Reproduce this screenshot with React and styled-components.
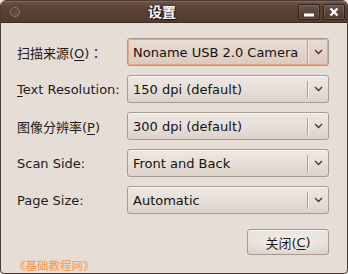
import React from "react";
import styled, { createGlobalStyle } from "styled-components";

const GlobalStyle = createGlobalStyle`
  html, body { margin: 0; padding: 0; background: #ece7e2; }
  * { box-sizing: border-box; }
`;

const FONT = `"DejaVu Sans", "Noto Sans CJK SC", sans-serif`;

const Window = styled.div`
  width: 348px;
  height: 274px;
  border: 1px solid #4a3c34;
  border-radius: 6px 6px 4px 4px;
  overflow: hidden;
  display: flex;
  flex-direction: column;
  background: #e6ded6;
  font-family: ${FONT};
`;

const TitleBar = styled.div`
  height: 22px;
  flex: none;
  display: flex;
  align-items: center;
  padding: 0 2px 0 9px;
  background: linear-gradient(#6e5447 0%, #5c4337 30%, #543b30 100%);
  border-bottom: 1px solid #3a2a22;
  box-shadow: inset 0 1px 0 rgba(255, 255, 255, 0.12);
`;

const MenuDot = styled.div`
  width: 10px;
  height: 10px;
  border-radius: 50%;
  border: 1.5px solid #8e7c71;
  background: radial-gradient(circle at 60% 65%, #6b5246, #4d362c);
  margin-right: 6px;
  flex: none;
`;

const Title = styled.div`
  flex: 1;
  text-align: center;
  color: #ffffff;
  font-weight: bold;
  font-size: 14px;
  line-height: 16px;
  text-shadow: 1px 1px 0 #1a100c, 0 0 2px #1a100c;
`;

const TitleButtons = styled.div`
  display: flex;
  gap: 3px;
`;

const TitleButton = styled.div`
  width: 22px;
  height: 16px;
  border: 1px solid #2f211b;
  border-radius: 2px;
  background: linear-gradient(#6b5246, #4f382e);
  box-shadow: inset 0 0 0 1px rgba(255, 255, 255, 0.13);
  display: flex;
  align-items: center;
  justify-content: center;
`;

const Body = styled.div`
  flex: 1;
  display: flex;
  flex-direction: column;
  padding: 15px 18px 0 16px;
`;

const Form = styled.div`
  display: grid;
  grid-template-columns: 110px 1fr;
  grid-auto-rows: 28px;
  row-gap: 9px;
  align-items: center;
`;

const Label = styled.div`
  font-size: 13px;
  color: #1e1b19;
  white-space: nowrap;
  u { text-decoration: underline; text-underline-offset: 2px; }
`;

const Colon = styled.span`
  font-family: "Noto Sans CJK TC", sans-serif;
`;

const Combo = styled.div`
  height: 28px;
  display: flex;
  align-items: stretch;
  border: 1px solid #a79a90;
  border-radius: 3px;
  background: ${(p) =>
    p.$focused
      ? "linear-gradient(#e9dcd3, #dcc9bd)"
      : "linear-gradient(#eee8e2 0%, #e6ded7 55%, #dcd2ca 100%)"};
  box-shadow: ${(p) =>
    p.$focused
      ? "inset 0 0 0 1px #e0a68a"
      : "inset 0 1px 0 rgba(255,255,255,0.7)"};
`;

const ComboValue = styled.div`
  flex: 1;
  display: flex;
  align-items: center;
  padding-left: 5px;
  font-size: 13px;
  color: #141210;
  white-space: nowrap;
`;

const Separator = styled.div`
  width: 2px;
  margin: ${(p) => (p.$focused ? "1px 0" : "5px 0 4px")};
  border-left: 1px solid ${(p) => (p.$focused ? "#b7a399" : "#a89e96")};
  border-right: 1px solid ${(p) => (p.$focused ? "#f1e2d9" : "#f6f2ee")};
`;

const Arrow = styled.div`
  width: 19px;
  display: flex;
  align-items: center;
  justify-content: center;
`;

const Footer = styled.div`
  display: flex;
  justify-content: flex-end;
  margin-top: 15px;
`;

const Button = styled.div`
  width: 82px;
  height: 26px;
  border: 1px solid #a69a90;
  border-radius: 3px;
  background: radial-gradient(ellipse 60% 50% at 50% 50%, #f6f2ee, rgba(246,242,238,0) 100%),
    linear-gradient(#ece6e0, #ddd4cc);
  box-shadow: inset 0 1px 0 rgba(255,255,255,0.7);
  display: flex;
  align-items: center;
  justify-content: center;
  font-size: 13px;
  color: #1a1816;
  u { text-decoration: underline; text-underline-offset: 2px; }
`;

const Watermark = styled.div`
  margin: 3px 0 0 -3px;
  font-size: 11.5px;
  line-height: 14px;
  font-weight: 500;
  color: #f89e5e;
  font-family: "Noto Sans CJK SC", sans-serif;
`;

const Chevron = () => (
  <svg width="9" height="6" viewBox="0 0 9 6">
    <path d="M1 1 L4.5 4.5 L8 1" fill="none" stroke="#3a3634" strokeWidth="1.3" />
  </svg>
);

const ComboBox = ({ value, focused }) => (
  <Combo $focused={focused}>
    <ComboValue>{value}</ComboValue>
    <Separator $focused={focused} />
    <Arrow>
      <Chevron />
    </Arrow>
  </Combo>
);

const rows = [
  { label: <>扫描来源(<u>O</u>)<Colon>：</Colon></>, value: "Noname USB 2.0 Camera", focused: true },
  { label: <><u>T</u>ext Resolution:</>, value: "150 dpi (default)" },
  { label: <>图像分辨率(<u>P</u>)</>, value: "300 dpi (default)" },
  { label: <>Scan Side:</>, value: "Front and Back" },
  { label: <>Page Size:</>, value: "Automatic" },
];

export default function App() {
  return (
    <>
      <GlobalStyle />
      <Window>
        <TitleBar>
          <MenuDot />
          <Title>设置</Title>
          <TitleButtons>
            <TitleButton>
              <svg width="10" height="10" viewBox="0 0 10 10">
                <rect x="0" y="6.5" width="10" height="3" fill="#ffffff" />
              </svg>
            </TitleButton>
            <TitleButton>
              <svg width="10" height="10" viewBox="0 0 10 10">
                <path d="M1.5 1.5 L8.5 8.5 M8.5 1.5 L1.5 8.5" stroke="#ffffff" strokeWidth="2.4" />
              </svg>
            </TitleButton>
          </TitleButtons>
        </TitleBar>
        <Body>
          <Form>
            {rows.map((r, i) => (
              <React.Fragment key={i}>
                <Label>{r.label}</Label>
                <ComboBox value={r.value} focused={r.focused} />
              </React.Fragment>
            ))}
          </Form>
          <Footer>
            <Button>关闭(<u>C</u>)</Button>
          </Footer>
          <Watermark>《基础教程网》</Watermark>
        </Body>
      </Window>
    </>
  );
}
